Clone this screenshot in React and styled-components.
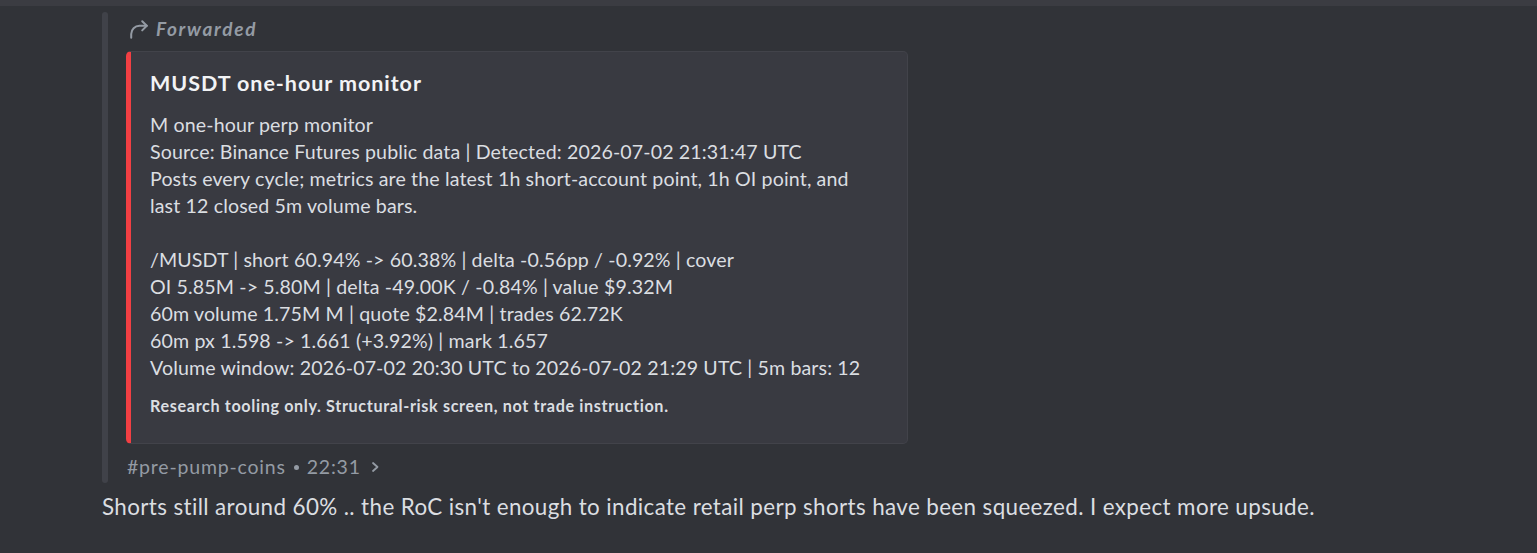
import React from "react";
import styled, { createGlobalStyle } from "styled-components";

const GlobalStyle = createGlobalStyle`
  html, body {
    margin: 0;
    padding: 0;
    background: #313338;
  }
  body {
    font-family: "Lato", "Noto Sans", sans-serif;
    color: #dbdee1;
  }
`;

const Page = styled.div`
  width: 1537px;
  height: 553px;
  overflow: hidden;
  background: #313338;
`;

const TopStrip = styled.div`
  height: 6px;
  background: #3b3c42;
`;

const Message = styled.div`
  padding: 6px 0 0 102px;
`;

const Forward = styled.div`
  display: flex;
  align-items: stretch;
`;

const QuoteBar = styled.div`
  width: 6px;
  flex-shrink: 0;
  border-radius: 3px;
  background: #404249;
`;

const ForwardBody = styled.div`
  padding-left: 18px;
  padding-bottom: 4px;
`;

const ForwardedLabel = styled.div`
  display: flex;
  align-items: center;
  gap: 6px;
  height: 33px;
  margin-bottom: 6px;
  padding-left: 2px;
  color: #949ba4;
  font-size: 19px;
  font-weight: 700;
  font-style: italic;
  letter-spacing: 1.7px;
`;

const Embed = styled.div`
  width: 782px;
  box-sizing: border-box;
  background: #393a41;
  border: 1px solid #42434a;
  border-left: 5px solid #f23f43;
  border-radius: 5px;
  padding: 16px 20px 26px 19px;
`;

const Title = styled.div`
  font-size: 21.5px;
  font-weight: 700;
  color: #f2f3f5;
  line-height: 30px;
  letter-spacing: 0.95px;
  margin-bottom: 13px;
`;

const Description = styled.div`
  font-size: 19.6px;
  line-height: 27px;
  letter-spacing: 0.13px;
  white-space: pre-wrap;
  color: #dbdee1;
`;

const EmbedFooter = styled.div`
  margin-top: 14px;
  font-size: 16.2px;
  font-weight: 700;
  line-height: 22px;
  letter-spacing: 0.63px;
  color: #dbdee1;
`;

const Meta = styled.div`
  display: flex;
  align-items: center;
  gap: 8px;
  padding-left: 1px;
  margin-top: 11px;
  font-size: 19.5px;
  line-height: 24px;
  letter-spacing: 0.8px;
  color: #949ba4;
`;

const Dot = styled.span`
  width: 5px;
  height: 5px;
  border-radius: 50%;
  background: #949ba4;
`;

const MessageText = styled.div`
  margin-top: 9px;
  font-size: 22.4px;
  line-height: 30px;
  letter-spacing: 0.38px;
  color: #dbdee1;
`;

const ForwardIcon = () => (
  <svg width="22" height="22" viewBox="0 0 24 24" fill="none" stroke="#949ba4" strokeWidth="2.2" strokeLinecap="round" strokeLinejoin="round">
    <path d="M3.5 21.5v-4a9 9 0 0 1 9-9h8" />
    <path d="M15.5 3.5l5 5-5 5" />
  </svg>
);

const Chevron = () => (
  <svg width="12" height="14" viewBox="0 0 12 14" fill="none" stroke="#949ba4" strokeWidth="1.8" strokeLinecap="round" strokeLinejoin="round">
    <path d="M4 3l4.5 4L4 11" />
  </svg>
);

const description = `M one-hour perp monitor
Source: Binance Futures public data | Detected: 2026-07-02 21:31:47 UTC
Posts every cycle; metrics are the latest 1h short-account point, 1h OI point, and
last 12 closed 5m volume bars.

/MUSDT | short 60.94% -> 60.38% | delta -0.56pp / -0.92% | cover
OI 5.85M -> 5.80M | delta -49.00K / -0.84% | value $9.32M
60m volume 1.75M M | quote $2.84M | trades 62.72K
60m px 1.598 -> 1.661 (+3.92%) | mark 1.657
Volume window: 2026-07-02 20:30 UTC to 2026-07-02 21:29 UTC | 5m bars: 12`;

export default function App() {
  return (
    <Page>
      <GlobalStyle />
      <TopStrip />
      <Message>
        <Forward>
          <QuoteBar />
          <ForwardBody>
            <ForwardedLabel>
              <ForwardIcon />
              Forwarded
            </ForwardedLabel>
            <Embed>
              <Title>MUSDT one-hour monitor</Title>
              <Description>{description}</Description>
              <EmbedFooter>
                Research tooling only. Structural-risk screen, not trade instruction.
              </EmbedFooter>
            </Embed>
            <Meta>
              <span>#pre-pump-coins</span>
              <Dot />
              <span>22:31</span>
              <Chevron />
            </Meta>
          </ForwardBody>
        </Forward>
        <MessageText>
          Shorts still around 60% .. the RoC isn't enough to indicate retail perp shorts have been squeezed. I expect more upsude.
        </MessageText>
      </Message>
    </Page>
  );
}
